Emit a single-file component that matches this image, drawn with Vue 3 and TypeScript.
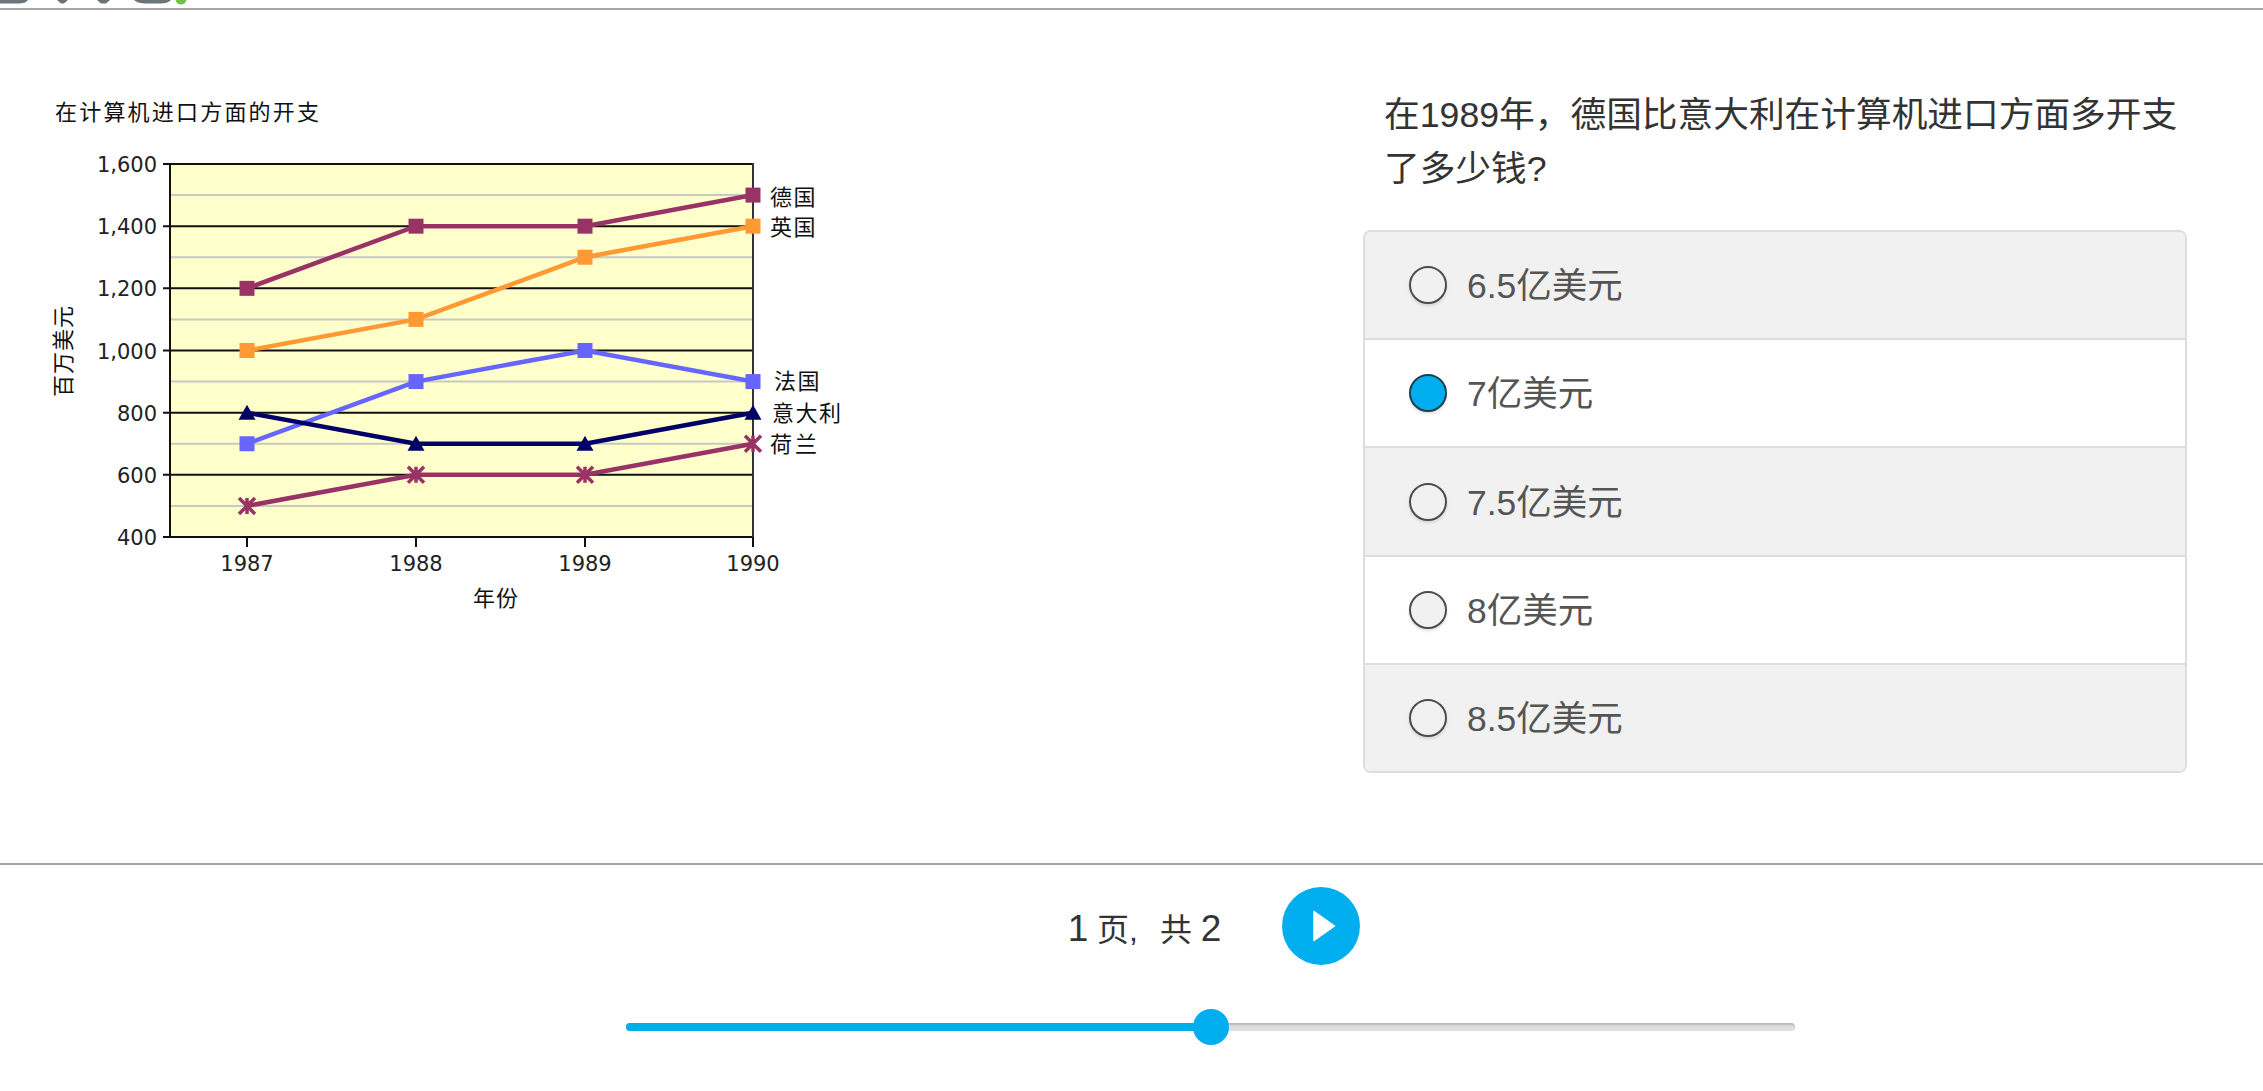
<template>
  <div class="page">
    <header class="top-bar">
      <svg class="logo" width="190" height="8" viewBox="0 0 190 8">
        <path d="M0 0H28Q26 3.5 18 3.5H0Z" fill="#6b7479" />
        <path d="M57 0H68L64 3.5H61Z" fill="#6b7479" />
        <path d="M97 0H110L106 3.5H101Z" fill="#6b7479" />
        <path d="M134 0H171Q168 3.5 160 3.5H146Q138 3.5 134 0Z" fill="#6b7479" />
        <circle cx="181" cy="-1" r="5.5" fill="#6cc24a" />
      </svg>
    </header>

    <main class="content">
      <section class="chart-col">
        <svg class="chart" width="820" height="530" viewBox="40 90 820 530">
          <text class="cjk" x="55" y="120" letter-spacing="2.2">在计算机进口方面的开支</text>

          <rect x="170" y="164" width="583" height="373" fill="#ffffcc" />
          <line
            v-for="v in minorTicks"
            :key="'m' + v"
            x1="170"
            x2="753"
            :y1="yOf(v)"
            :y2="yOf(v)"
            stroke="#c8c8c4"
            stroke-width="2"
          />
          <line
            v-for="v in majorTicks"
            :key="'g' + v"
            x1="163"
            x2="753"
            :y1="yOf(v)"
            :y2="yOf(v)"
            stroke="#111"
            stroke-width="2"
          />
          <line x1="170" x2="170" y1="163" y2="538" stroke="#111" stroke-width="2" />
          <line x1="753" x2="753" y1="163" y2="538" stroke="#333" stroke-width="2" />
          <line
            v-for="x in xs"
            :key="'t' + x"
            :x1="x"
            :x2="x"
            y1="537"
            y2="547"
            stroke="#111"
            stroke-width="2"
          />

          <text
            v-for="v in majorTicks"
            :key="'y' + v"
            class="num"
            x="157"
            :y="yOf(v) + 8"
            text-anchor="end"
          >{{ v.toLocaleString('en-US') }}</text>
          <text
            v-for="(x, i) in xs"
            :key="'x' + x"
            class="num"
            :x="x"
            y="571"
            text-anchor="middle"
          >{{ years[i] }}</text>

          <text class="cjk" x="473" y="606" letter-spacing="1">年份</text>
          <text
            class="cjk"
            transform="translate(71 397) rotate(-90)"
            letter-spacing="1"
          >百万美元</text>

          <g v-for="s in series" :key="s.name">
            <polyline
              :points="linePoints(s.values)"
              fill="none"
              :stroke="s.color"
              stroke-width="4.5"
            />
            <g v-for="(v, i) in s.values" :key="i">
              <rect
                v-if="s.marker === 'square'"
                :x="xs[i] - 7.5"
                :y="yOf(v) - 7.5"
                width="15"
                height="15"
                :fill="s.color"
              />
              <polygon
                v-else-if="s.marker === 'triangle'"
                :points="trianglePoints(xs[i], yOf(v))"
                :fill="s.color"
              />
              <path
                v-else
                :d="crossPath(xs[i], yOf(v))"
                :stroke="s.color"
                stroke-width="3.5"
                fill="none"
              />
            </g>
            <text class="cjk" :x="s.labelX" :y="s.labelY" :letter-spacing="s.spacing">{{ s.name }}</text>
          </g>
        </svg>
      </section>

      <section class="question-col">
        <p class="question">在1989年，德国比意大利在计算机进口方面多开支了多少钱?</p>
        <div class="options">
          <label
            v-for="(opt, i) in options"
            :key="opt"
            class="option"
            :class="{ odd: i % 2 === 0 }"
            @click="selected = i"
          >
            <span class="radio" :class="{ checked: selected === i }"></span>
            <span class="option-text">{{ opt }}</span>
          </label>
        </div>
      </section>
    </main>

    <footer class="footer">
      <div class="footer-inner">
        <div class="pager">
          <span class="page-text"><b>1</b> 页<span class="comma">,</span> 共 <b>2</b></span>
          <button class="next-btn" type="button" aria-label="next">
            <svg width="24" height="32" viewBox="0 0 24 32">
              <path d="M2 1.5L22.5 16L2 30.5Z" fill="#fff" stroke="#fff" stroke-width="1.5" stroke-linejoin="round" />
            </svg>
          </button>
        </div>
        <div class="slider">
          <div class="slider-fill" :style="{ width: progress + '%' }"></div>
          <div class="slider-thumb" :style="{ left: progress + '%' }"></div>
        </div>
      </div>
    </footer>
  </div>
</template>

<script setup lang="ts">
import { ref } from 'vue'

type Marker = 'square' | 'triangle' | 'cross'

interface Series {
  name: string
  color: string
  marker: Marker
  values: number[]
  labelX: number
  labelY: number
  spacing: number
}

const years = [1987, 1988, 1989, 1990]
const xs = [247, 416, 585, 753]
const majorTicks = [1600, 1400, 1200, 1000, 800, 600, 400]
const minorTicks = [1500, 1300, 1100, 900, 700, 500]

const series: Series[] = [
  { name: '德国', color: '#993366', marker: 'square', values: [1200, 1400, 1400, 1500], labelX: 770, labelY: 205, spacing: 1.5 },
  { name: '英国', color: '#ff9933', marker: 'square', values: [1000, 1100, 1300, 1400], labelX: 770, labelY: 235, spacing: 1.5 },
  { name: '法国', color: '#6666ff', marker: 'square', values: [700, 900, 1000, 900], labelX: 774, labelY: 389, spacing: 1.5 },
  { name: '意大利', color: '#000066', marker: 'triangle', values: [800, 700, 700, 800], labelX: 772, labelY: 421, spacing: 1.5 },
  { name: '荷兰', color: '#993366', marker: 'cross', values: [500, 600, 600, 700], labelX: 770, labelY: 452, spacing: 3 }
]

const options = ['6.5亿美元', '7亿美元', '7.5亿美元', '8亿美元', '8.5亿美元']
const selected = ref(1)
const progress = ref(50)

function yOf(v: number) {
  return 537 - ((v - 400) * 373) / 1200
}

function linePoints(values: number[]) {
  return values.map((v, i) => `${xs[i]},${yOf(v)}`).join(' ')
}

function trianglePoints(x: number, y: number) {
  return `${x},${y - 8} ${x + 8.5},${y + 7} ${x - 8.5},${y + 7}`
}

function crossPath(x: number, y: number) {
  return `M${x - 8} ${y - 8}L${x + 8} ${y + 8}M${x + 8} ${y - 8}L${x - 8} ${y + 8}M${x} ${y - 8}V${y + 8}`
}
</script>

<style scoped>
.page {
  width: 2263px;
  height: 1091px;
  display: flex;
  flex-direction: column;
  background: #fff;
  color: #333;
  font-family: "Liberation Sans", "Noto Sans CJK SC", sans-serif;
}

.top-bar {
  height: 8px;
  border-bottom: 2px solid #a6a6a6;
  overflow: hidden;
}

.logo {
  display: block;
}

.content {
  height: 853px;
  display: grid;
  grid-template-columns: 1363px 824px;
}

.chart-col {
  padding: 80px 0 0 40px;
}

.chart {
  display: block;
}

.cjk {
  font-family: "Noto Sans CJK SC", sans-serif;
  font-size: 22px;
  fill: #111;
}

.num {
  font-family: "DejaVu Sans", sans-serif;
  font-size: 21px;
  fill: #222;
}

.question {
  margin: 78px 0 34px;
  padding-left: 21px;
  width: 803px;
  font-size: 35.7px;
  line-height: 54px;
  color: #333;
}

.options {
  height: 543px;
  box-sizing: border-box;
  display: flex;
  flex-direction: column;
  border: 2px solid #ddd;
  border-radius: 8px;
  overflow: hidden;
}

.option {
  flex: 1;
  display: flex;
  align-items: center;
  padding-left: 44px;
  gap: 20px;
  background: #fff;
  cursor: pointer;
}

.option + .option {
  border-top: 2px solid #ddd;
}

.option.odd {
  background: #f1f1f1;
}

.radio {
  width: 38px;
  height: 38px;
  box-sizing: border-box;
  border: 2px solid #4d4d4d;
  border-radius: 50%;
  background: #f1f1f1;
  box-shadow: 0 2px 3px rgba(0, 0, 0, 0.12);
}

.radio.checked {
  background: #00aeef;
  border-color: #1c3f52;
}

.option-text {
  padding-bottom: 5px;
  font-size: 35.5px;
  color: #555;
}

.footer {
  flex: 1;
  border-top: 2px solid #a6a6a6;
}

.footer-inner {
  width: 1169px;
  margin-left: 626px;
  padding-top: 22px;
}

.pager {
  display: flex;
  align-items: center;
  justify-content: center;
  gap: 61px;
  padding-left: 7px;
}

.page-text {
  padding-top: 2px;
  font-size: 32px;
  color: #333;
  white-space: nowrap;
}

.page-text b {
  font-weight: normal;
  font-size: 37px;
}

.comma {
  margin-right: 13px;
}

.next-btn {
  width: 78px;
  height: 78px;
  padding: 0 0 0 6px;
  border: none;
  border-radius: 50%;
  background: #00aeef;
  display: flex;
  align-items: center;
  justify-content: center;
  cursor: pointer;
}

.slider {
  position: relative;
  height: 8px;
  margin-top: 58px;
  border-radius: 4px;
  background: #dfdfdf;
  box-shadow: inset 0 2px 2px rgba(0, 0, 0, 0.18);
}

.slider-fill {
  height: 100%;
  border-radius: 4px;
  background: #00aeef;
}

.slider-thumb {
  position: absolute;
  top: -14px;
  width: 36px;
  height: 36px;
  margin-left: -18px;
  border-radius: 50%;
  background: #00aeef;
}
</style>

<style>
html,
body {
  margin: 0;
  overflow: hidden;
}
</style>
